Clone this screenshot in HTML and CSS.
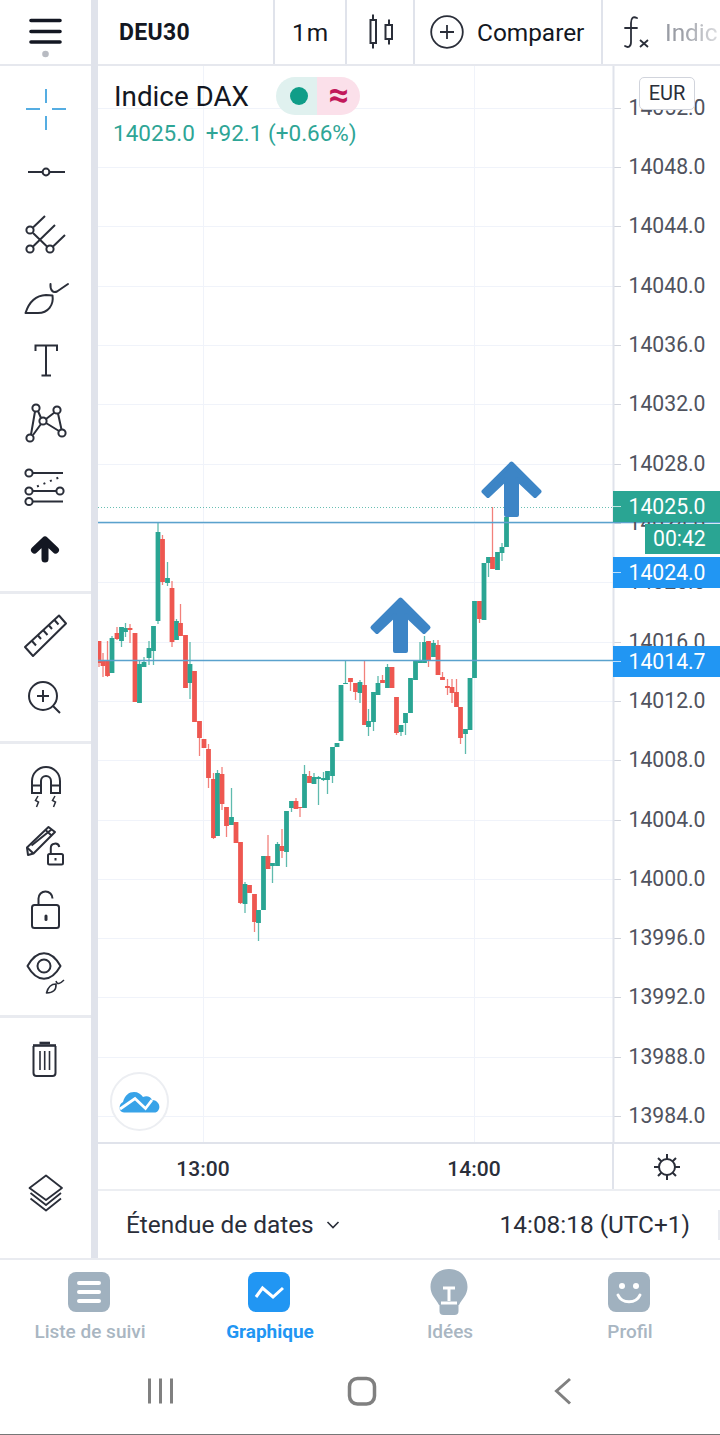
FILE: index.html
```html
<!DOCTYPE html>
<html lang="fr">
<head>
  <meta charset="UTF-8">
  <title>Indice DAX - Graphique</title>
  <link rel="stylesheet" href="styles.css">
</head>
<body>
<div class="app">
  <div class="workspace">

    <!-- left drawing tools, icons use page coordinates in their viewBox -->
    <div class="tools">
      <div class="tool-head">
        <svg class="icon" width="91" height="64" viewBox="0 0 91 64">
          <path d="M31 20.500H60M31 31.500H60M31 42H60" stroke="#131722" stroke-width="3.600" stroke-linecap="round"/>
          <circle cx="45.500" cy="54" r="3.300" fill="#b8bbc2"/>
        </svg>
      </div>

      <div class="tool-group group-draw">
        <svg class="icon" width="91" height="63" viewBox="0 78 91 63">
          <path d="M46 89V103M46 116V130M26 109H40M52 109H66" stroke="#55ade2" stroke-width="2"/>
        </svg>
        <svg class="icon" width="91" height="63" viewBox="0 141 91 63">
          <path d="M28 172H42M50 172H65" stroke="#2a2e39" stroke-width="2"/>
          <circle cx="46" cy="172" r="3.400" fill="#fff" stroke="#2a2e39" stroke-width="2"/>
        </svg>
        <svg class="icon" width="91" height="63" viewBox="0 204 91 63">
          <g fill="none" stroke="#2a2e39" stroke-width="2">
            <path d="M33 227.500L45 216M33 246.500L55 225M53 246.500L65 235M33 233L47.500 247"/>
            <circle cx="30" cy="230" r="3.600"/>
            <circle cx="30" cy="249" r="3.600"/>
            <circle cx="50" cy="249" r="3.600"/>
          </g>
        </svg>
        <svg class="icon" width="91" height="63" viewBox="0 267 91 63">
          <g fill="none" stroke="#2a2e39" stroke-width="2" stroke-linejoin="round" stroke-linecap="round">
            <path d="M25.500 313C29 302 36 295.500 46 295L52.500 295.500C54 305 48 313 38 313Z"/>
            <path d="M50.500 284C50 290 53 293.500 57 291.500L68 284"/>
          </g>
        </svg>
        <svg class="icon" width="91" height="63" viewBox="0 330 91 63">
          <path d="M35.500 351V345.500H57V351M46 345.500V375.500M41.500 375.500H51" fill="none" stroke="#2a2e39" stroke-width="2"/>
        </svg>
        <svg class="icon" width="91" height="63" viewBox="0 393 91 63">
          <g fill="none" stroke="#2a2e39" stroke-width="2">
            <path d="M35 411.500L31 434.500M38 411L41 418M54.500 412.500L46 419M58 413.500L61.500 429.500M46 423L59 431M41 424L33 435"/>
            <circle cx="36" cy="408" r="3.600"/>
            <circle cx="57" cy="410" r="3.600"/>
            <circle cx="43" cy="421" r="3.600"/>
            <circle cx="30" cy="438" r="3.600"/>
            <circle cx="62" cy="433" r="3.600"/>
          </g>
        </svg>
        <svg class="icon" width="91" height="63" viewBox="0 456 91 63">
          <g fill="none" stroke="#2a2e39" stroke-width="2">
            <path d="M33 473H63M33 491H56M33 501.500H63"/>
            <path d="M37 486.500L60 477" stroke-dasharray="2 5"/>
            <circle cx="29" cy="473" r="3.600"/>
            <circle cx="29" cy="491" r="3.600"/>
            <circle cx="60" cy="491" r="3.600"/>
            <circle cx="29" cy="501.500" r="3.600"/>
          </g>
        </svg>
        <svg class="icon" width="91" height="63" viewBox="0 519 91 63">
          <path d="M34.500 550L45 540L55.500 550M45 542V559" fill="none" stroke="#131722" stroke-width="7" stroke-linecap="round" stroke-linejoin="round"/>
        </svg>
      </div>

      <div class="tool-group group-measure">
        <svg class="icon" width="91" height="62" viewBox="0 604 91 62">
          <g fill="none" stroke="#2a2e39" stroke-width="2" stroke-linejoin="round">
            <path d="M25 647L59 615.500L66 623.500L33 656Z"/>
            <path d="M32 641L36 645.500M38 635.500L41 639M43.500 630.500L47.500 635M49 625.500L52 629M54.500 620L58.500 624.500"/>
          </g>
        </svg>
        <svg class="icon" width="91" height="62" viewBox="0 666 91 62">
          <g fill="none" stroke="#2a2e39" stroke-width="2">
            <circle cx="43" cy="696" r="14"/>
            <path d="M53 706L60 713M37 696H49M43 690V702"/>
          </g>
        </svg>
      </div>

      <div class="tool-group group-state">
        <svg class="icon" width="91" height="62" viewBox="0 756 91 62">
          <g fill="none" stroke="#2a2e39" stroke-width="2">
            <path d="M32 793V781A14 14 0 0 1 60 781V793H51V781A5 5 0 0 0 41 781V793Z"/>
            <path d="M32 785.500H41M51 785.500H60"/>
            <path d="M38 796L35.500 800.500L38.500 802L36.500 807M55 796L52.500 800.500L55.500 802L53.500 807" stroke-width="1.500"/>
          </g>
        </svg>
        <svg class="icon" width="91" height="62" viewBox="0 818 91 62">
          <g fill="none" stroke="#2a2e39" stroke-width="2" stroke-linejoin="round">
            <path d="M27 847.500L48.500 827L55 832L33.500 853.500L28 855Z"/>
            <path d="M31.500 845.500L51.500 829.500M27 847.500L33.500 853.500M45.500 830L51.500 835.500"/>
            <rect x="48" y="854" width="15" height="10.500" rx="1.500"/>
            <path d="M50.800 854V848A4.300 4.300 0 0 1 59.300 847"/>
            <path d="M55.500 858V860.500"/>
          </g>
        </svg>
        <svg class="icon" width="91" height="62" viewBox="0 880 91 62">
          <g fill="none" stroke="#2a2e39" stroke-width="2">
            <rect x="32" y="905" width="27" height="23" rx="2.500"/>
            <path d="M38.500 905V898.500A7 7 0 0 1 52.500 898.500"/>
            <path d="M46 916V919.500" stroke-width="3" stroke-linecap="round"/>
          </g>
        </svg>
        <svg class="icon" width="91" height="62" viewBox="0 942 91 62">
          <g fill="none" stroke="#2a2e39" stroke-width="2" stroke-linejoin="round">
            <path d="M27.500 966C37 949 51 949 60.500 966C51 983 37 983 27.500 966Z"/>
            <circle cx="44" cy="966" r="6.500"/>
            <path d="M46.500 993C48 987 51 984 56 984C56.500 990 53 993 46.500 993Z" stroke-width="1.600"/>
            <path d="M56 981C57 985 60 984 64 980" stroke-width="1.500"/>
          </g>
        </svg>
      </div>

      <div class="tool-group group-trash">
        <svg class="icon" width="91" height="62" viewBox="0 1028 91 62">
          <g fill="none" stroke="#2a2e39" stroke-width="2">
            <path d="M33.500 1046V1073A3 3 0 0 0 36.500 1076H52.500A3 3 0 0 0 55.500 1073V1046"/>
            <path d="M33 1045.500H56" stroke-width="2.600"/>
            <path d="M39.500 1043H50" stroke-width="2.600"/>
            <path d="M40 1051V1070M44.700 1051V1070M49.500 1051V1070" stroke-width="1.600"/>
          </g>
        </svg>
      </div>

      <div class="tool-layers">
        <svg class="icon" width="91" height="62" viewBox="0 1161 91 62">
          <g fill="none" stroke="#2a2e39" stroke-width="1.800" stroke-linejoin="round">
            <path d="M46 1175.500L62 1188L46 1200L29.500 1188Z"/>
            <path d="M30.500 1193L46 1205L61 1193M30.500 1198.500L46 1210.500L61 1198.500"/>
          </g>
        </svg>
      </div>
    </div>

    <div class="pane">
      <div class="topbar">
        <div class="cell cell-symbol">DEU30</div>
        <div class="cell cell-interval">1m</div>
        <div class="cell cell-style">
          <svg width="26" height="36" viewBox="368 14 26 36">
            <path d="M373 14.500V19M373 43V48.500M389 19.500V25M389 39V44.500" stroke="#2a2e39" stroke-width="2"/>
            <rect x="370.500" y="20" width="5.500" height="23" fill="none" stroke="#2a2e39" stroke-width="2"/>
            <rect x="385.500" y="25" width="6.500" height="14" fill="none" stroke="#2a2e39" stroke-width="2"/>
          </svg>
        </div>
        <div class="cell cell-compare">
          <svg width="34" height="34" viewBox="0 0 34 34">
            <circle cx="17" cy="17" r="15.800" fill="none" stroke="#2a2e39" stroke-width="1.800"/>
            <path d="M10 17H24M17 10V24" stroke="#2a2e39" stroke-width="1.800"/>
          </svg>
          <span>Comparer</span>
        </div>
        <div class="cell cell-indic">
          <svg width="28" height="34" viewBox="0 0 28 34">
            <path d="M14 3C10 1 8 3 8 8V27C8 32 5 33 2 31M2 13H14" fill="none" stroke="#2a2e39" stroke-width="1.800" stroke-linecap="round"/>
            <path d="M17 25L25 32M25 25L17 32" stroke="#2a2e39" stroke-width="1.800"/>
          </svg>
          <span class="indic-label">Indic</span>
        </div>
      </div>

      <div class="chart" id="chart">
        <svg class="chart-svg" id="chart-svg" width="622" height="1076" viewBox="98 66 622 1076">
          <g id="grid"></g>
          <g id="candles"></g>
          <path class="arrow" d="M511.500 463.500L539.500 491.500L535 496L517 479V515H506V479L488 496L483.500 491.500Z"/>
          <path class="arrow" d="M400.500 599.500L428.500 627.500L424 632L406 615V651H395V615L377 632L372.500 627.500Z"/>
        </svg>

        <div class="legend">
          <div class="legend-title">
            <span class="legend-name">Indice DAX</span>
            <span class="pill">
              <span class="pill-left"><i class="dot"></i></span>
              <span class="pill-right">≈</span>
            </span>
          </div>
          <div class="legend-values"><span>14025.0</span><span>+92.1 (+0.66%)</span></div>
        </div>

        <div class="currency">EUR</div>
        <div id="ticks"></div>

        <div class="tag tag-last">14025.0</div>
        <div class="tag tag-timer">00:42</div>
        <div class="tag tag-line1">14024.0</div>
        <div class="tag tag-line2">14014.7</div>

        <div class="tv-logo">
          <svg width="42" height="24" viewBox="119 1088 42 24">
            <path d="M124 1110.500C118 1110 118.500 1102 123 1100C125 1093 129 1090 134 1090C138 1090 141 1092 143 1095C147 1093 151 1095 152 1098C158 1098 161 1104 158.500 1108C157.500 1110 156 1110.500 154 1110.500Z" fill="#38a3e8"/>
            <path d="M120 1107L135 1096.500L145.500 1106.500L152 1098" fill="none" stroke="#fff" stroke-width="2.800"/>
          </svg>
        </div>
      </div>

      <div class="timeaxis">
        <div class="time-labels">
          <span class="time-label time-13">13:00</span>
          <span class="time-label time-14">14:00</span>
        </div>
        <div class="time-gear">
          <svg width="30" height="30" viewBox="0 0 30 30">
            <circle cx="15" cy="15" r="8" fill="none" stroke="#2a2e39" stroke-width="2"/>
            <path d="M15 2V7M15 23V28M2 15H7M23 15H28M6 6L9.300 9.300M20.700 20.700L24 24M6 24L9.300 20.700M20.700 9.300L24 6" stroke="#2a2e39" stroke-width="2"/>
          </svg>
        </div>
      </div>

      <div class="rangebar">
        <div class="range-select">
          <span>Étendue de dates</span>
          <svg width="14" height="8" viewBox="0 0 14 8"><path d="M1.500 1L7 6.500L12.500 1" fill="none" stroke="#2a2e39" stroke-width="1.600"/></svg>
        </div>
        <div class="range-clock">14:08:18 (UTC+1)</div>
        <div class="range-end"></div>
      </div>
    </div>
  </div>

  <div class="tabbar">
    <div class="tab">
      <svg width="42" height="48" viewBox="0 0 42 48">
        <rect y="4" width="42" height="40" rx="8" fill="#a0b1bf"/>
        <path d="M11 15H31M11 24H31M11 33H31" stroke="#fff" stroke-width="4" stroke-linecap="round"/>
      </svg>
      <span>Liste de suivi</span>
    </div>
    <div class="tab tab-active">
      <svg width="42" height="48" viewBox="0 0 42 48">
        <rect y="4" width="42" height="40" rx="8" fill="#2196f3"/>
        <path d="M8 29L14.500 20L25 29L35 20" fill="none" stroke="#fff" stroke-width="3"/>
      </svg>
      <span>Graphique</span>
    </div>
    <div class="tab">
      <svg width="42" height="48" viewBox="0 0 42 48">
        <path d="M21 1C10 1 2.500 9 2.500 19C2.500 27 8 31 11 37H31C34 31 39.500 27 39.500 19C39.500 9 32 1 21 1Z" fill="#a0b1bf"/>
        <path d="M11.500 37H30.500V43A4 4 0 0 1 26.500 47H15.500A4 4 0 0 1 11.500 43Z" fill="#a0b1bf"/>
        <path d="M15 20H27M21 20V33M13 35H29" fill="none" stroke="#fff" stroke-width="3"/>
      </svg>
      <span>Idées</span>
    </div>
    <div class="tab">
      <svg width="42" height="48" viewBox="0 0 42 48">
        <rect y="4" width="42" height="40" rx="8" fill="#a0b1bf"/>
        <circle cx="14" cy="18" r="3" fill="#fff"/>
        <circle cx="28" cy="18" r="3" fill="#fff"/>
        <path d="M10 27C14 36 28 36 32 27" fill="none" stroke="#fff" stroke-width="3" stroke-linecap="round"/>
      </svg>
      <span>Profil</span>
    </div>
  </div>

  <div class="navbar">
    <svg width="720" height="76" viewBox="0 1358 720 76">
      <g fill="none" stroke="#808080" stroke-width="3">
        <path d="M149.500 1378.500V1403.500M160.500 1378.500V1403.500M171.500 1378.500V1403.500"/>
        <rect x="349.500" y="1378.500" width="25" height="25.500" rx="8" stroke-width="3.500"/>
        <path d="M570 1379L556.500 1391L570 1403.500"/>
      </g>
    </svg>
  </div>
</div>
<script src="chart.js"></script>
</body>
</html>
```
FILE: styles.css
```css
* { box-sizing: border-box; }
html, body { margin: 0; padding: 0; background: #fff; }
body { font-family: Roboto, "Liberation Sans", sans-serif; color: #131722; }
.app {
  width: 720px;
  height: 1435px;
  display: flex;
  flex-direction: column;
  overflow: hidden;
  border-bottom: 1px solid #777;
}
.icon { display: block; }

.workspace { display: flex; height: 1260px; flex: none; border-bottom: 2px solid #e9ebf0; }

/* tools column */
.tools {
  width: 98px;
  flex: none;
  display: flex;
  flex-direction: column;
  border-right: 7px solid #e0e3eb;
}
.tool-head { height: 66px; border-bottom: 2px solid #e6e8ee; }
.tool-group { border-bottom: 3px solid #e9ebf0; }
.group-draw { padding: 12px 0 9px; }
.group-measure { padding: 10px 0 13px; }
.group-state { padding: 12px 0 11px; }
.group-trash { padding-top: 10px; border-bottom: none; }
.tool-layers { margin-top: auto; padding-bottom: 35px; }

.pane { flex: 1; min-width: 0; display: flex; flex-direction: column; }

/* top bar */
.topbar {
  height: 66px;
  flex: none;
  display: flex;
  align-items: stretch;
  border-bottom: 2px solid #e6e8ee;
  overflow: hidden;
  font-size: 24.400px;
}
.cell { display: flex; align-items: center; border-right: 2px solid #e0e3eb; flex: none; }
.cell-symbol { width: 177px; padding-left: 21px; font-weight: 700; font-size: 23px; letter-spacing: 0.3px; }
.cell-interval { width: 72px; padding-left: 17px; letter-spacing: 1px; }
.cell-style { width: 68px; padding-left: 21px; }
.cell-compare { width: 188px; padding-left: 15px; gap: 13px; }
.cell-indic { border-right: none; padding-left: 20px; gap: 14px; }
.indic-label {
  color: #9a9da5;
  -webkit-mask-image: linear-gradient(to right, #000 30%, rgba(0, 0, 0, 0.35) 100%);
  mask-image: linear-gradient(to right, #000 30%, rgba(0, 0, 0, 0.35) 100%);
}

/* chart */
.chart { position: relative; height: 1076px; flex: none; }
.chart-svg { position: absolute; top: 0; left: 0; display: block; }
.arrow { fill: #3d85c6; stroke: #3d85c6; stroke-width: 4; stroke-linejoin: round; }

.legend { position: absolute; left: 16px; top: 11px; }
.legend-title { display: flex; align-items: center; gap: 27px; }
.legend-name { font-size: 27.800px; color: #131722; }
.pill { display: flex; width: 84px; height: 38px; border-radius: 19px; overflow: hidden; }
.pill-left { width: 41px; background: #e0f1ef; display: flex; align-items: center; justify-content: flex-end; padding-right: 9px; }
.pill-right { flex: 1; background: #fbe0ea; color: #c2185b; font-size: 36px; font-weight: 700; text-align: center; line-height: 36px; }
.dot { display: block; width: 18px; height: 18px; border-radius: 50%; background: #0f9d88; }
.legend-values { display: flex; gap: 11px; margin: 5px 0 0 -1px; font-size: 22.500px; color: #2ea596; }

.currency {
  position: absolute;
  left: 541px;
  top: 11px;
  width: 56px;
  height: 33px;
  background: #fff;
  border: 1px solid #d1d4dc;
  border-radius: 5px;
  font-size: 20px;
  line-height: 30px;
  text-align: center;
  color: #2a2e39;
  z-index: 2;
}

.tick {
  position: absolute;
  left: 530.500px;
  font-size: 21.200px;
  line-height: 24px;
  color: #50535e;
  transform: translateY(-50%);
}

.tag {
  position: absolute;
  left: 515px;
  width: 107px;
  height: 31px;
  padding-left: 15.500px;
  font-size: 21.200px;
  line-height: 31px;
  color: #fff;
}
.tag::before { content: ""; position: absolute; left: 0; top: 15px; width: 8px; height: 1px; background: rgba(255, 255, 255, 0.7); }
.tag-last { top: 425px; background: #2aa593; }
.tag-timer { top: 458px; left: 547px; width: 75px; height: 30px; padding: 0 0 0 8px; background: #2aa593; line-height: 29px; }
.tag-timer::before { display: none; }
.tag-line1 { top: 491px; background: #2196f3; }
.tag-line2 { top: 580px; background: #2196f3; }

.tv-logo {
  position: absolute;
  left: 12px;
  top: 1006px;
  width: 59px;
  height: 59px;
  border-radius: 50%;
  background: #fff;
  border: 2px solid #eceef2;
  display: flex;
  align-items: center;
  justify-content: center;
}

/* time axis */
.timeaxis { height: 49px; flex: none; display: flex; border-top: 2px solid #e0e3eb; border-bottom: 2px solid #eceef2; }
.time-labels { width: 516px; position: relative; border-right: 2px solid #e0e3eb; }
.time-label { position: absolute; top: 0; line-height: 50px; font-size: 21px; font-weight: 500; color: #2a2e39; transform: translateX(-50%); }
.time-13 { left: 105px; }
.time-14 { left: 376px; }
.time-gear { flex: 1; display: flex; align-items: center; justify-content: center; }

/* date range bar */
.rangebar {
  flex: 1;
  display: flex;
  align-items: center;
  padding-left: 28px;
  font-size: 24.400px;
  color: #2a2e39;
}
.range-select { display: flex; align-items: center; gap: 12px; }
.range-clock { margin-left: auto; }
.range-end { width: 2px; height: 30px; margin-left: 28px; background: #e9ebf0; }

/* bottom tabs */
.tabbar { height: 98px; flex: none; display: flex; padding-top: 8px; }
.tab {
  width: 180px;
  display: flex;
  flex-direction: column;
  align-items: center;
  font-size: 19px;
  font-weight: 500;
  line-height: 22px;
  color: #a9b6c2;
}
.tab svg { margin-right: 2px; }
.tab span { margin-top: 5px; }
.tab-active { color: #2196f3; font-weight: 700; }

.navbar { flex: 1; }
.navbar svg { display: block; }
```
FILE: chart.js
```js
// price scale: 14048 sits at y=167 (page), one point is 14.83px
var TOP = 66;
function priceY(p) { return 167 + (14048 - p) * 14.83; }

// x, body top, body bottom, wick top, wick bottom, u/d
var candles = [
  [99, 641, 663, 641, 667, 'd'], [103, 660, 666, 653, 677, 'd'], [107.5, 660, 676, 641, 677, 'd'],
  [112, 638, 673, 636, 673, 'u'], [117, 633, 639, 627, 640, 'd'], [121.500, 627, 641, 627, 647, 'u'],
  [125.500, 628, 632, 623, 637, 'u'], [130, 628, 630, 624, 643, 'd'], [135, 633, 702, 633, 702, 'd'],
  [139.500, 664, 703, 660, 703, 'u'], [144, 662, 667, 657, 667, 'u'], [149, 648, 658, 641, 665, 'u'],
  [153.500, 626, 651, 626, 665, 'u'], [158, 532, 621, 523, 624, 'u'], [162.500, 539, 582, 535, 585, 'd'],
  [167.500, 578, 583, 562, 586, 'u'], [172, 588, 642, 581, 647, 'd'], [176.500, 621, 640, 619, 640, 'u'],
  [180.500, 623, 636, 604, 636, 'd'], [185.500, 635, 688, 635, 688, 'd'], [190, 664, 683, 642, 699, 'u'],
  [194.500, 671, 722, 671, 722, 'd'], [199.500, 721, 738, 721, 756, 'd'], [204, 739, 748, 739, 748, 'd'],
  [208.500, 749, 778, 744, 788, 'd'], [213.500, 779, 838, 773, 839, 'd'], [217.500, 773, 836, 770, 836, 'u'],
  [222, 774, 804, 767, 810, 'd'], [226.500, 807, 826, 807, 837, 'd'], [231.500, 817, 825, 788, 825, 'u'],
  [236, 822, 843, 822, 843, 'd'], [240.500, 842, 903, 842, 904, 'd'], [245, 884, 904, 882, 913, 'u'],
  [249.500, 885, 893, 885, 893, 'd'], [254.500, 894, 922, 894, 932, 'd'], [258.500, 910, 923, 910, 941, 'u'],
  [263.500, 856, 910, 856, 910, 'u'], [268, 856, 869, 835, 869, 'd'], [272.500, 863, 866, 863, 883, 'u'],
  [277.500, 844, 866, 842, 866, 'u'], [282, 846, 851, 829, 858, 'd'], [286.500, 811, 852, 811, 867, 'u'],
  [291.500, 801, 808, 801, 812, 'u'], [296, 801, 809, 798, 809, 'd'], [300, 807, 808, 807, 817, 'd'],
  [304.500, 774, 808, 765, 808, 'u'], [309.500, 776, 783, 771, 783, 'd'], [314, 777, 784, 773, 784, 'u'],
  [318.500, 777, 779, 776, 805, 'u'], [323.500, 778, 780, 772, 781, 'u'], [327.500, 771, 780, 771, 794, 'u'],
  [332.500, 747, 776, 747, 783, 'u'], [337, 743, 747, 743, 747, 'u'], [341, 685, 741, 685, 741, 'u'],
  [345.500, 683, 684, 661, 684, 'u'], [350.500, 678, 682, 678, 691, 'd'], [355.500, 683, 692, 683, 700, 'd'],
  [360, 682, 693, 680, 703, 'u'], [364.500, 685, 725, 661, 725, 'd'], [368.500, 721, 727, 709, 736, 'u'],
  [373.500, 692, 722, 692, 731, 'u'], [378, 683, 695, 676, 695, 'u'], [382.500, 680, 683, 675, 683, 'd'],
  [387.500, 667, 688, 664, 688, 'u'], [392, 667, 688, 667, 688, 'd'], [396.500, 697, 733, 697, 735, 'd'],
  [401, 725, 732, 725, 736, 'u'], [405.500, 713, 723, 713, 735, 'u'], [410.500, 678, 713, 678, 713, 'u'],
  [415.500, 661, 680, 661, 680, 'u'], [420, 660, 663, 642, 663, 'u'], [424.500, 642, 663, 636, 663, 'u'],
  [428.500, 641, 661, 641, 667, 'd'], [433.500, 643, 657, 640, 657, 'u'], [438, 645, 675, 640, 675, 'd'],
  [442.500, 677, 680, 672, 680, 'd'], [447.500, 686, 688, 679, 695, 'd'], [452, 687, 693, 679, 703, 'd'],
  [456.500, 692, 707, 679, 707, 'd'], [460.500, 707, 738, 707, 744, 'd'], [465.500, 729, 734, 729, 754, 'u'],
  [470, 678, 730, 678, 730, 'u'], [474.500, 601, 678, 601, 678, 'u'], [479.500, 601, 619, 601, 623, 'd'],
  [484, 563, 620, 563, 620, 'u'], [488.500, 557, 563, 557, 577, 'u'], [492.500, 557, 569, 507, 569, 'd'],
  [497.500, 552, 570, 552, 570, 'u'], [502, 547, 553, 543, 561, 'u'], [506.500, 517, 547, 517, 547, 'u']
];

var NS = 'http://www.w3.org/2000/svg';
function add(parent, tag, attrs) {
  var el = document.createElementNS(NS, tag);
  for (var k in attrs) el.setAttribute(k, attrs[k]);
  parent.appendChild(el);
  return el;
}
function line(parent, x1, y1, x2, y2, color, width, dash) {
  var attrs = { x1: x1, y1: y1, x2: x2, y2: y2, stroke: color, 'stroke-width': width };
  if (dash) attrs['stroke-dasharray'] = dash;
  return add(parent, 'line', attrs);
}

var grid = document.getElementById('grid');
var ticks = document.getElementById('ticks');

// vertical grid, horizontal grid and scale labels
line(grid, 203.5, 66, 203.5, 1142, '#f0f3fa', 1);
line(grid, 474.5, 66, 474.5, 1142, '#f0f3fa', 1);
for (var p = 14052; p >= 13984; p -= 4) {
  var y = Math.round(priceY(p));
  line(grid, 98, y + 0.5, 613, y + 0.5, '#f0f3fa', 1);
  line(grid, 613, y + 0.5, 621, y + 0.5, '#d1d4dc', 1);
  var label = document.createElement('span');
  label.className = 'tick';
  label.style.top = (y - TOP) + 'px';
  label.textContent = p.toFixed(1);
  ticks.appendChild(label);
}
line(grid, 613.5, 66, 613.5, 1142, '#e0e3eb', 2);

var chartLines = document.getElementById('candles');
candles.forEach(function (c) {
  var color = c[5] === 'u' ? '#2aa593' : '#ee5750';
  line(chartLines, c[0], c[3], c[0], c[4], color, 1.300).setAttribute('opacity', '0.75');
  add(chartLines, 'rect', { x: c[0] - 2.400, y: c[1], width: 4.800, height: c[2] - c[1], fill: color });
});

// last price and drawn levels
line(chartLines, 98, 507.5, 613, 507.5, '#2aa593', 1, '1 2').setAttribute('opacity', '0.7');
line(chartLines, 98, 522.5, 720, 522.5, '#5aa2cd', 1.500);
line(chartLines, 98, 660.5, 620, 660.5, '#5aa2cd', 1.500);
```
